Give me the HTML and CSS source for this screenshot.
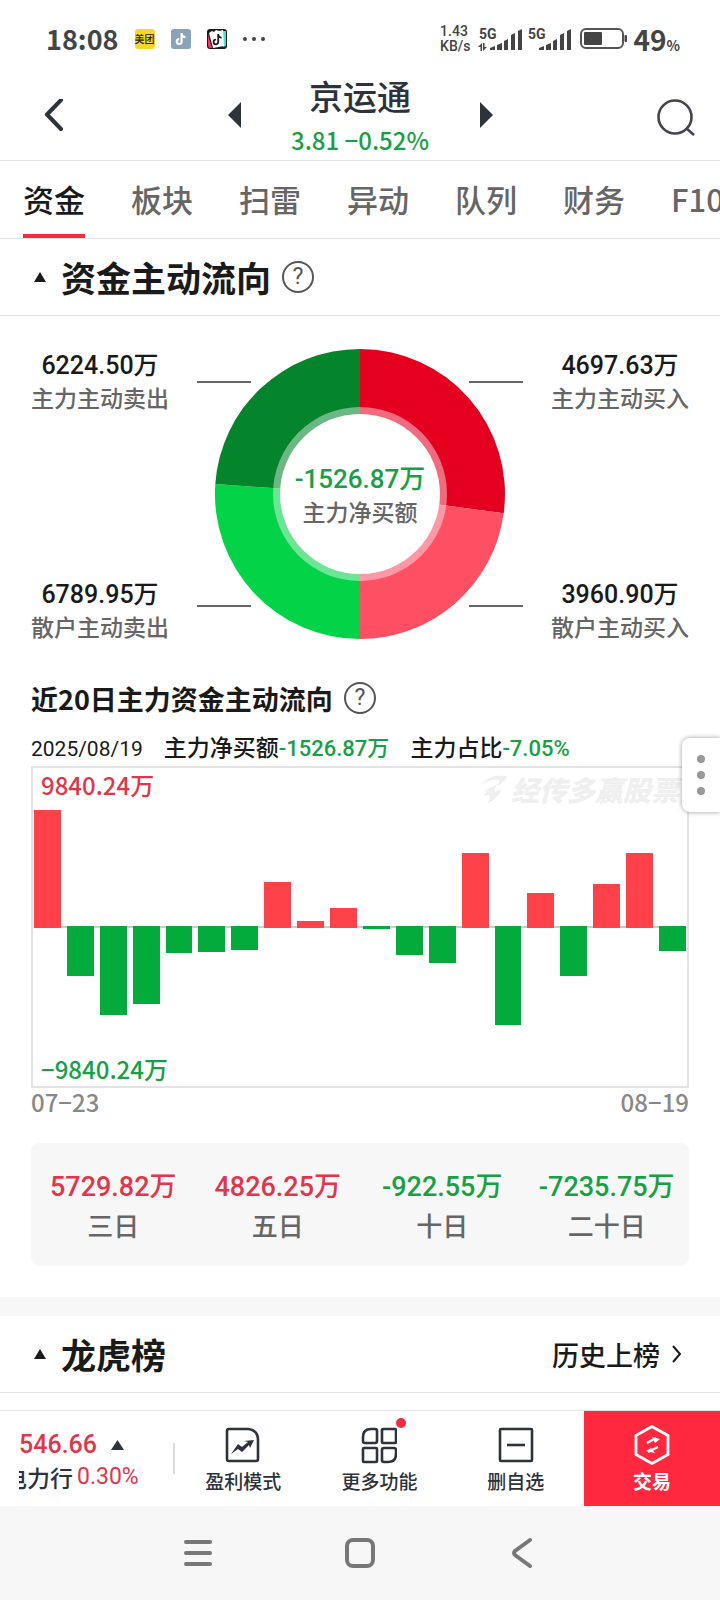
FILE: index.html
```html
<!doctype html>
<html lang="zh-CN">
<head>
    <meta charset="UTF-8">
    <meta name="viewport" content="width=device-width, initial-scale=1.0">
    <title>京运通 - 资金</title>
    <link rel="stylesheet" href="styles.css">
</head>
<body>
    <!-- 状态栏 -->
    <div class="status">
        <div class="status-left">
            <span class="time">18:08</span>
            <span class="app-icon meituan">美团</span>
            <svg class="app-icon" viewBox="0 0 20 20">
                <rect width="20" height="20" rx="3" fill="#8aa3b8"/>
                <path d="M10.6 4v8.6a2.4 2.4 0 1 1-2.4-2.4M10.6 5c.4 1.900 1.600 3 3.900 3.200" fill="none" stroke="#fff" stroke-width="2.200"/>
            </svg>
            <svg class="app-icon" viewBox="0 0 20 20">
                <rect width="20" height="20" rx="3" fill="#1b1b1b"/>
                <path d="M1 5l4 14H2.500L1 17z" fill="#f5315f"/>
                <path d="M15 2h4v15l-3 1z" fill="#3fe3e3"/>
                <path d="M2 4l3-2 2 1 2-2 3 1 4-1 1 16-11 2z" fill="#fff"/>
                <path d="M11.200 5v8a2.300 2.300 0 1 1-2.300-2.300M11.200 6c.5 1.600 1.500 2.500 3.400 2.600" fill="none" stroke="#1b1b1b" stroke-width="1.800"/>
            </svg>
            <svg class="more" viewBox="0 0 22 20" fill="#444">
                <circle cx="2" cy="10" r="2"/><circle cx="11" cy="10" r="2"/><circle cx="20" cy="10" r="2"/>
            </svg>
        </div>
        <div class="status-right">
            <div class="speed"><span>1.43</span><span>KB/s</span></div>
            <svg class="signal" viewBox="0 0 46 28" fill="#444">
                <text x="1" y="14">5G</text>
                <path d="M0 22l4-4v8H2.500v-4zM9 22l-4 4v-8h1.500v4zM12 23l5-2v4h-5zM19 20l5-2v7h-5zM26 16l4-2v11h-4zM33 10l4-2v17h-4zM40 6l4-2v21h-4z"/>
            </svg>
            <svg class="signal" viewBox="0 0 46 28" fill="#444">
                <text x="1" y="14">5G</text>
                <path d="M12 23l5-2v4h-5zM19 20l5-2v7h-5zM26 16l4-2v11h-4zM33 10l4-2v17h-4zM40 6l4-2v21h-4z"/>
            </svg>
            <svg class="battery" viewBox="0 0 48 22">
                <rect x="1" y="1" width="42" height="19" rx="5" fill="none" stroke="#555" stroke-width="2"/>
                <rect x="4" y="4" width="18" height="13" rx="1" fill="#444"/>
                <rect x="44.500" y="7" width="2.500" height="7" rx="1" fill="#444"/>
            </svg>
            <span class="percent">49<small>%</small></span>
        </div>
    </div>

    <!-- 股票标题 -->
    <header class="header">
        <button type="button" class="icon-btn" aria-label="返回">
            <svg width="40" height="40" viewBox="0 0 40 40"><path d="M37 1L23 15.500 37 30" fill="none" stroke="#2d333b" stroke-width="4" stroke-linecap="round" stroke-linejoin="round"/></svg>
        </button>
        <div class="stock">
            <button type="button" class="icon-btn" aria-label="上一只">
                <svg width="13" height="34" viewBox="0 0 13 34"><path d="M13 0v26L0 13z" fill="#2d333b"/></svg>
            </button>
            <div class="stock-info">
                <h1>京运通</h1>
                <p class="down">3.81 −0.52%</p>
            </div>
            <button type="button" class="icon-btn" aria-label="下一只">
                <svg width="13" height="34" viewBox="0 0 13 34"><path d="M0 0v26l13-13z" fill="#2d333b"/></svg>
            </button>
        </div>
        <button type="button" class="icon-btn" aria-label="搜索">
            <svg width="40" height="40" viewBox="0 0 40 40" fill="none" stroke="#45434d" stroke-width="2.600"><circle cx="19" cy="18" r="16.500"/><path d="M30 29l8 7"/></svg>
        </button>
    </header>

    <nav class="tabs">
        <a href="#" class="active">资金</a>
        <a href="#">板块</a>
        <a href="#">扫雷</a>
        <a href="#">异动</a>
        <a href="#">队列</a>
        <a href="#">财务</a>
        <a href="#">F10</a>
    </nav>

    <main>
        <!-- 资金主动流向 -->
        <section>
            <div class="section-title">
                <svg width="12" height="10" viewBox="0 0 12 10"><path d="M6 0l6 10H0z" fill="#1a1a1a"/></svg>
                <h2>资金主动流向</h2>
                <button type="button" class="help" aria-label="说明">?</button>
            </div>
            <div class="flow">
                <dl class="flow-col">
                    <div><dt>6224.50万</dt><dd>主力主动卖出</dd></div>
                    <div><dt>6789.95万</dt><dd>散户主动卖出</dd></div>
                </dl>
                <div class="donut">
                    <svg viewBox="0 0 326 290">
                        <path d="M163 145V0A145 145 0 0 1 306.700 164.300z" fill="#e6001f"/>
                        <path d="M163 145L306.700 164.300A145 145 0 0 1 163 290z" fill="#ff4f63"/>
                        <path d="M163 145V290A145 145 0 0 1 18.300 135.100z" fill="#03d447"/>
                        <path d="M163 145L18.300 135.100A145 145 0 0 1 163 0z" fill="#04842b"/>
                        <circle cx="163" cy="145" r="87" fill="#fff" fill-opacity=".42"/>
                        <circle cx="163" cy="145" r="80" fill="#fff"/>
                        <path d="M0 33h54M272 33h54M0 257h54M272 257h54" stroke="#666" stroke-width="2"/>
                    </svg>
                    <div class="donut-text">
                        <strong class="down">-1526.87万</strong>
                        <span>主力净买额</span>
                    </div>
                </div>
                <dl class="flow-col">
                    <div><dt>4697.63万</dt><dd>主力主动买入</dd></div>
                    <div><dt>3960.90万</dt><dd>散户主动买入</dd></div>
                </dl>
            </div>

            <div class="history">
                <div class="history-title">
                    <h3>近20日主力资金主动流向</h3>
                    <button type="button" class="help" aria-label="说明">?</button>
                </div>
                <p class="history-info">
                    <span class="date">2025/08/19</span>
                    <span>主力净买额<b class="down">-1526.87万</b></span>
                    <span>主力占比<b class="down">-7.05%</b></span>
                </p>
                <div class="chart">
                    <span class="chart-max up">9840.24万</span>
                    <div class="watermark">
                        <svg width="30" height="28" viewBox="0 0 30 28" fill="#efefef">
                            <path d="M2 10C8 2 18-1 28 1c-1 4-5 8-10 10 2-3 3-5 2-6-5-1-12 1-18 5z"/>
                            <path d="M4 17c5-3 10-6 14-8-2 4-3 6-2 8 3-2 5-2 7-3-2 5-7 11-14 14 2-4 2-6 1-8-2 0-4 0-5 2 0-2 2-4 4-6-2 0-4 1-5 1z"/>
                        </svg>
                        <span>经传多赢股票</span>
                    </div>
                    <div class="bars" id="bars"></div>
                    <span class="chart-min down">−9840.24万</span>
                </div>
                <div class="dates"><span>07−23</span><span>08−19</span></div>

                <dl class="summary">
                    <div><dt class="up">5729.82万</dt><dd>三日</dd></div>
                    <div><dt class="up">4826.25万</dt><dd>五日</dd></div>
                    <div><dt class="down">-922.55万</dt><dd>十日</dd></div>
                    <div><dt class="down">-7235.75万</dt><dd>二十日</dd></div>
                </dl>
            </div>
        </section>

        <!-- 龙虎榜 -->
        <section class="rank">
            <div class="section-title">
                <svg width="12" height="10" viewBox="0 0 12 10"><path d="M6 0l6 10H0z" fill="#1a1a1a"/></svg>
                <h2>龙虎榜</h2>
                <a href="#" class="rank-link">历史上榜
                    <svg width="10" height="18" viewBox="0 0 10 18"><path d="M1 1l7 8-7 8" fill="none" stroke="#1a1a1a" stroke-width="2"/></svg>
                </a>
            </div>
        </section>
    </main>

    <button type="button" class="float-btn" aria-label="更多">
        <svg width="8" height="40" viewBox="0 0 8 40" fill="#999"><circle cx="4" cy="4" r="4"/><circle cx="4" cy="20" r="4"/><circle cx="4" cy="36" r="4"/></svg>
    </button>

    <footer class="footer">
        <div class="toolbar">
            <div class="ticker">
                <div class="ticker-row">
                    <span class="ticker-price up">546.66</span>
                    <svg width="13" height="10" viewBox="0 0 13 10"><path d="M6.500 0L13 10H0z" fill="#2d333b"/></svg>
                </div>
                <div class="ticker-row">
                    <span class="ticker-name"><span>电力行</span></span>
                    <span class="ticker-rate up">0.30%</span>
                </div>
            </div>
            <button type="button" class="tool">
                <svg width="36" height="40" viewBox="0 0 36 40">
                    <path d="M3 4h20q10 1 10 11v19q0 2-2 2H4q-2 0-2-2V6q0-2 2-2z" fill="none" stroke="#2d333b" stroke-width="2.600"/>
                    <path d="M6 29l7-10 4 3 6-5-4-1 10-1-4 8-1-3-7 7-4-3z" fill="#2d333b"/>
                </svg>
                盈利模式
            </button>
            <button type="button" class="tool">
                <svg width="36" height="40" viewBox="0 0 36 40" fill="none" stroke="#2d333b" stroke-width="2.600">
                    <path d="M10 4h4q2 0 2 2v10q0 2-2 2H4q-2 0-2-2v-4q0-8 8-8z"/>
                    <rect x="21" y="4" width="14" height="14" rx="1"/>
                    <rect x="2" y="23" width="14" height="14" rx="1"/>
                    <path d="M23 23h10q2 0 2 2v4q0 8-8 8h-4q-2 0-2-2V25q0-2 2-2z"/>
                </svg>
                更多功能
                <i class="dot"></i>
            </button>
            <button type="button" class="tool">
                <svg width="36" height="40" viewBox="0 0 36 40" fill="none" stroke="#2d333b" stroke-width="2.600"><rect x="2" y="4" width="32" height="32" rx="1"/><path d="M9 20h18"/></svg>
                删自选
            </button>
            <button type="button" class="tool trade">
                <svg width="36" height="40" viewBox="0 0 36 40">
                    <path d="M18 1.500l16 9v19l-16 9-16-9v-19z" fill="none" stroke="#fff" stroke-width="2.800" stroke-linejoin="round"/>
                    <path d="M13 18l9-5M24 22l-10 5" stroke="#fff" stroke-width="2.400"/>
                    <path d="M18 12l8 2-5 4zM12 26l9 2-4-5z" fill="#fff"/>
                </svg>
                交易
            </button>
        </div>
        <div class="sysnav">
            <button type="button" class="icon-btn" aria-label="任务">
                <svg width="32" height="32" viewBox="0 0 32 32"><path d="M4 5h24M4 16h24M4 27h24" stroke="#777" stroke-width="4" stroke-linecap="round"/></svg>
            </button>
            <button type="button" class="icon-btn" aria-label="主页">
                <svg width="32" height="32" viewBox="0 0 32 32"><rect x="3" y="3" width="26" height="26" rx="6" fill="none" stroke="#777" stroke-width="4"/></svg>
            </button>
            <button type="button" class="icon-btn" aria-label="返回">
                <svg width="32" height="32" viewBox="0 0 32 32"><path d="M24 3L9 14q-2 2 0 4l15 11" fill="none" stroke="#777" stroke-width="4" stroke-linecap="round"/></svg>
            </button>
        </div>
    </footer>

    <script type="text/javascript">
        // 近20日主力净买额（万）
        var max = 9840.24;
        var data = [7230, -3050, -5470, -4780, -1640, -1580, -1480, 2810, 420, 1240,
            -180, -1810, -2270, 4590, -6070, 2170, -3050, 2710, 4590, -1526.87];
        var bars = document.getElementById('bars');

        data.forEach(function(value) {
            var col = document.createElement('div');
            var bar = document.createElement('div');
            col.className = value > 0 ? 'bar-col' : 'bar-col negative';
            bar.className = 'bar';
            // 正负各占一半高度
            bar.style.height = Math.abs(value) / max * 100 + '%';
            col.appendChild(bar);
            bars.appendChild(col);
        });
    </script>
</body>
</html>
```
FILE: styles.css
```css
* {
    box-sizing: border-box;
    margin: 0;
    padding: 0;
}

body {
    display: flex;
    flex-direction: column;
    min-height: 100vh;
    overflow-x: hidden;

    font-family: "Noto Sans CJK SC", sans-serif;
    font-weight: 500;
    color: #1a1a1a;
    background: #fff;
}

button {
    border: 0;
    font: inherit;
    color: inherit;
    background: none;
}

a {
    color: inherit;
    text-decoration: none;
}

svg {
    display: block;
    flex: none;
}

.up {
    color: #e5344a;
}

.down {
    color: #17a145;
}

.icon-btn {
    display: flex;
}

/* 状态栏 */
.status {
    display: flex;
    justify-content: space-between;
    height: 77px;
    padding: 0 40px 0 46px;
    color: #444;
}

.status-left,
.status-right {
    display: flex;
    align-items: center;
}

.status-left {
    gap: 16px;
}

.time {
    font-size: 27px;
    font-weight: 700;
}

.app-icon {
    width: 20px;
    height: 20px;
}

.meituan {
    border-radius: 3px;
    font-size: 10px;
    line-height: 20px;
    text-align: center;
    color: #222;
    background: #fbd52f;
}

.more {
    width: 22px;
    height: 20px;
}

.status-right {
    gap: 3px;
}

.speed {
    display: flex;
    flex-direction: column;
    margin-right: 5px;
    font-family: Roboto, sans-serif;
    font-size: 14px;
    line-height: 15px;
}

.signal {
    width: 46px;
    height: 28px;
    font-family: Roboto, sans-serif;
    font-size: 14px;
    font-weight: 700;
}

.battery {
    width: 48px;
    height: 22px;
    margin: 0 2px 0 4px;
}

.percent {
    font-size: 28px;
    font-weight: 700;
}

.percent small {
    font-size: 14px;
}

/* 股票标题 */
.header {
    display: flex;
    align-items: center;
    justify-content: space-between;
    height: 84px;
    padding: 0 24px;
    border-bottom: 1px solid #e3e3e3;
}

.stock {
    display: flex;
    align-items: center;
}

.stock-info {
    width: 239px;
    text-align: center;
}

.stock-info h1 {
    font-size: 34px;
    font-weight: 500;
    line-height: 38px;
    color: #2d333b;
}

.stock-info p {
    margin-top: 4px;
    font-size: 24px;
    line-height: 42px;
}

/* 标签页 */
.tabs {
    display: flex;
    gap: 46px;
    height: 78px;
    padding: 0 23px;
    overflow: hidden;
    border-bottom: 1px solid #e3e3e3;

    font-size: 31px;
    line-height: 76px;
    color: #666;
}

.tabs a {
    flex: none;
}

.tabs .active {
    border-bottom: 4px solid #f7293f;
    color: #1a1a1a;
}

/* 区块标题 */
.section-title {
    display: flex;
    align-items: center;
    height: 77px;
    padding: 0 38px 0 34px;
    border-bottom: 1px solid #e3e3e3;
}

.section-title h2 {
    margin-left: 15px;
    font-size: 35px;
    line-height: 52px;
}

.help {
    width: 32px;
    height: 32px;
    margin-left: 11px;
    border: 2px solid #555;
    border-radius: 50%;

    font-family: Roboto, sans-serif;
    font-size: 23px;
    font-weight: 400;
    line-height: 28px;
    text-align: center;
    color: #555;
}

/* 环形图 */
.flow {
    display: flex;
    justify-content: space-between;
    padding: 33px 31px 37px;
}

.flow-col {
    display: flex;
    flex-direction: column;
    gap: 166px;
    text-align: center;
}

.flow-col dt {
    font-family: Roboto, "Noto Sans CJK SC", sans-serif;
    font-size: 25px;
    line-height: 33px;
}

.flow-col dd {
    font-size: 23px;
    line-height: 30px;
    color: #666;
}

.donut {
    position: relative;
    width: 326px;
}

/* 圆环中间的文字 */
.donut-text {
    position: absolute;
    top: 0;
    left: 0;
    display: flex;
    flex-direction: column;
    align-items: center;
    justify-content: center;
    width: 100%;
    height: 100%;

    font-size: 23px;
    line-height: 32px;
    color: #666;
}

.donut-text strong {
    font-family: Roboto, "Noto Sans CJK SC", sans-serif;
    font-size: 26px;
    font-weight: 500;
}

/* 近20日 */
.history {
    padding: 0 31px 31px;
}

.history-title {
    display: flex;
    align-items: center;
    height: 40px;
}

.history-title h3 {
    font-size: 27px;
}

.history-info {
    display: flex;
    align-items: baseline;
    gap: 21px;
    height: 38px;
    margin-top: 10px;
    font-size: 23px;
    line-height: 36px;
}

.history-info .date,
.history-info b {
    font-family: Roboto, "Noto Sans CJK SC", sans-serif;
    font-size: 22px;
    font-weight: 500;
}

.history-info .date {
    font-size: 21px;
    font-weight: 400;
}

.chart {
    position: relative;
    padding: 0 1px;
    border: 2px solid #e3e3e3;
    font-size: 24px;
    line-height: 34px;
}

.chart-max,
.chart-min,
.watermark {
    position: absolute;
    left: 8px;
}

.chart-max {
    top: 0;
}

.chart-min {
    bottom: 0;
}

.watermark {
    top: 4px;
    right: 8px;
    left: auto;
    display: flex;
    align-items: center;
    gap: 2px;

    font-size: 28px;
    font-style: italic;
    font-weight: 900;
    color: #efefef;
}

.bars {
    display: grid;
    grid-template-columns: repeat(20, 1fr);
    gap: 6px;
    height: 318px;
    background: linear-gradient(#ccc, #ccc) center / 100% 2px no-repeat;
}

.bar-col {
    display: flex;
    align-items: flex-end;
    height: 160px;
}

.bar-col.negative {
    align-items: flex-start;
    align-self: end;
}

.bar {
    width: 100%;
    background: #ff4249;
}

.negative .bar {
    background: #02ab3c;
}

.dates {
    display: flex;
    justify-content: space-between;
    font-size: 24px;
    line-height: 28px;
    color: #888;
}

.summary {
    display: grid;
    grid-template-columns: repeat(4, 1fr);
    margin-top: 27px;
    padding: 25px 0 23px;
    border-radius: 8px;
    text-align: center;
    background: #f7f7f7;
}

.summary dt {
    font-family: Roboto, "Noto Sans CJK SC", sans-serif;
    font-size: 27px;
    font-weight: 500;
    line-height: 39px;
}

.summary dd {
    font-size: 26px;
    line-height: 36px;
    color: #666;
}

/* 龙虎榜 */
.rank {
    border-top: 19px solid #f7f7f7;
}

.rank-link {
    display: flex;
    align-items: center;
    gap: 12px;
    margin-left: auto;
    font-size: 27px;
}

/* 悬浮按钮 */
.float-btn {
    position: fixed;
    top: 738px;
    right: 0;
    display: flex;
    align-items: center;
    justify-content: center;
    width: 38px;
    height: 74px;
    border-radius: 8px 0 0 8px;
    background: #fff;
    box-shadow: 0 0 5px rgba(0, 0, 0, .4);
}

/* 底部 */
.footer {
    position: sticky;
    bottom: 0;
    margin-top: auto;
    border-top: 1px solid #e3e3e3;
    background: #fff;
}

.toolbar {
    display: grid;
    grid-template-columns: 175px repeat(3, 1fr) 136px;
    height: 95px;
    color: #2d333b;
}

.ticker {
    position: relative;
    display: flex;
    flex-direction: column;
    justify-content: center;
    padding: 4px 0 0 19px;
}

.ticker::after {
    position: absolute;
    top: 32px;
    right: 0;
    width: 2px;
    height: 31px;
    background: #ddd;
    content: "";
}

.ticker-row {
    display: flex;
    align-items: center;
    line-height: 32px;
}

.ticker-price,
.ticker-rate {
    font-family: Roboto, sans-serif;
    font-size: 25px;
}

.ticker-price {
    margin-right: 14px;
}

.ticker-rate {
    margin-left: 4px;
    font-size: 23px;
    font-weight: 400;
}

/* 滚动的板块名，左侧被裁掉 */
.ticker-name {
    display: flex;
    justify-content: flex-end;
    width: 54px;
    overflow: hidden;
    font-size: 23px;
}

.ticker-name span {
    flex: none;
}

.tool {
    position: relative;
    display: flex;
    flex-direction: column;
    align-items: center;
    padding-top: 14px;
    font-size: 19px;
    line-height: 32px;
}

.dot {
    position: absolute;
    top: 7px;
    left: 50%;
    width: 10px;
    height: 10px;
    margin-left: 17px;
    border-radius: 50%;
    background: #f7293f;
}

.trade {
    font-weight: 700;
    color: #fff;
    background: #ff283e;
}

.sysnav {
    display: flex;
    align-items: center;
    justify-content: center;
    gap: 130px;
    height: 94px;
    background: #f7f7f7;
}
```
